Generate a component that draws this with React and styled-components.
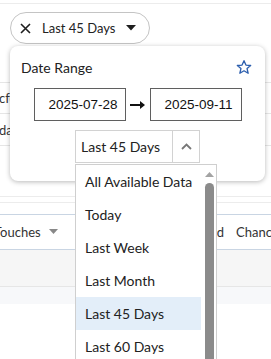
import React from "react";
import styled, { createGlobalStyle } from "styled-components";

const Global = createGlobalStyle`
  html, body { margin: 0; padding: 0; background: #fff; }
  body { font-family: Lato, "Open Sans", sans-serif; color: #222; }
  * { box-sizing: border-box; }
`;

const Page = styled.div`
  position: relative;
  width: 271px;
  height: 359px;
  overflow: hidden;
  background: #fff;
  padding-top: 3px;
`;

const FilterBar = styled.div`
  border-top: 1px solid #ececec;
  padding: 8px 10px 0;
  height: 79px;
`;

const Pill = styled.button`
  display: inline-flex;
  align-items: center;
  height: 32px;
  width: 140px;
  padding: 0 0 0 9px;
  border: 1px solid #c4c4c4;
  border-radius: 16px;
  background: #fff;
  font-family: Lato, sans-serif;
  font-size: 13px;
  color: #222;
  gap: 11px;
`;

const BgRow = styled.div`
  height: ${(p) => p.$h}px;
  border-top: 1px solid ${(p) => p.$line || "#e6e6e6"};
  background: ${(p) => p.$bg || "transparent"};
  display: flex;
  align-items: center;
  font-size: 13px;
  color: #333;
  white-space: nowrap;
  overflow: hidden;
`;

const HeaderGrid = styled.div`
  height: 35px;
  border-top: 1px solid #c9d5e3;
  display: grid;
  grid-template-columns: 160px 64px 80px;
  align-items: center;
  font-size: 13px;
  color: #333;
  white-space: nowrap;
  overflow: hidden;
`;

const ClipText = styled.span`
  margin-left: ${(p) => p.$offset || 0}px;
`;

const HeaderCell = styled.span`
  display: inline-flex;
  align-items: center;
  justify-content: ${(p) => (p.$right ? "flex-end" : "flex-start")};
  gap: 8px;
  margin-left: ${(p) => p.$offset || 0}px;
`;

const Popover = styled.div`
  position: absolute;
  top: 46px;
  left: 10px;
  width: 255px;
  height: 135px;
  background: #fff;
  border-radius: 8px;
  box-shadow: 0 1px 5px rgba(0, 0, 0, 0.28);
  padding: 12px 13px 0 11px;
`;

const PopHeader = styled.div`
  display: flex;
  justify-content: space-between;
  align-items: center;
  height: 18px;
`;

const Title = styled.span`
  font-size: 14px;
  color: #222;
`;

const DateRow = styled.div`
  display: flex;
  justify-content: center;
  align-items: center;
  gap: 4px;
  margin-top: 12px;
  margin-left: -11px;
  margin-right: -13px;
`;

const DateBox = styled.div`
  width: 92px;
  height: 33px;
  border: 1px solid #5f5f5f;
  display: flex;
  align-items: center;
  padding-left: 14px;
  font-family: "Liberation Sans", Arial, sans-serif;
  font-size: 13.5px;
  color: #111;
`;

const SelectRow = styled.div`
  display: flex;
  justify-content: center;
  margin-top: 9px;
  margin-left: -11px;
  margin-right: -13px;
`;

const SelectWrap = styled.div`
  position: relative;
  width: 125px;
  height: 33px;
`;

const SelectBox = styled.div`
  display: flex;
  height: 33px;
  border: 1px solid #d2d2d2;
  background: #fff;
`;

const SelectValue = styled.span`
  flex: 1;
  display: flex;
  align-items: center;
  padding-left: 5px;
  font-size: 14px;
  color: #222;
`;

const SelectToggle = styled.span`
  width: 27px;
  border-left: 1px solid #d2d2d2;
  display: flex;
  align-items: center;
  justify-content: center;
`;

const Menu = styled.div`
  position: absolute;
  top: 34px;
  left: 0;
  width: 142px;
  height: 240px;
  display: flex;
  background: #fff;
  border: 1px solid #cfcfcf;
  overflow: hidden;
`;

const MenuList = styled.ul`
  flex: 1;
  margin: 0;
  padding: 0;
  list-style: none;
`;

const MenuItem = styled.li`
  height: 33px;
  display: flex;
  align-items: center;
  padding-left: 9px;
  font-size: 14px;
  color: #222;
  white-space: nowrap;
  background: ${(p) => (p.$active ? "#e3eef9" : "transparent")};
`;

const ScrollTrack = styled.div`
  width: 15px;
  flex: 0 0 15px;
  display: flex;
  flex-direction: column;
  align-items: center;
  padding-top: 7px;
`;

const ScrollThumb = styled.div`
  margin-top: 6px;
  width: 9px;
  flex: 1;
  background: #8b8b8b;
  border-radius: 5px 5px 0 0;
  margin-left: 2px;
`;

const options = [
  "All Available Data",
  "Today",
  "Last Week",
  "Last Month",
  "Last 45 Days",
  "Last 60 Days",
  "Last 90 Days",
  "Last Quarter",
];

export default function App() {
  return (
    <>
      <Global />
      <Page>
        <FilterBar>
          <Pill>
            <svg width="11" height="11" viewBox="0 0 11 11">
              <path d="M1 1L10 10M10 1L1 10" stroke="#1e1e1e" strokeWidth="1.6" />
            </svg>
            <span>Last 45 Days</span>
            <svg width="10" height="6" viewBox="0 0 10 6">
              <path d="M0 0H10L5 5.5Z" fill="#1e1e1e" />
            </svg>
          </Pill>
        </FilterBar>
        <BgRow $h={31}>
          <ClipText $offset={-1}>cfo</ClipText>
        </BgRow>
        <BgRow $h={32}>
          <ClipText $offset={-1}>da</ClipText>
        </BgRow>
        <BgRow $h={51} />
        <BgRow $h={6} $line="#ececec" />
        <BgRow $h={12} $line="#ececec" />
        <HeaderGrid>
          <HeaderCell $offset={-6}>
            Touches
            <svg width="9" height="6" viewBox="0 0 9 6">
              <path d="M0 0H9L4.5 5Z" fill="#888" />
            </svg>
          </HeaderCell>
          <HeaderCell $right>Updated</HeaderCell>
          <HeaderCell $offset={12}>Chance</HeaderCell>
        </HeaderGrid>
        <BgRow $h={37} $line="#c9d5e3" $bg="#f6f6f6" />
        <BgRow $h={18} $line="#e6e6e6" $bg="#f7f8fa" />

        <Popover>
          <PopHeader>
            <Title>Date Range</Title>
            <svg width="16" height="16" viewBox="0 0 24 24">
              <path
                d="M12 2.5l2.9 6.6 7.1.6-5.4 4.7 1.6 7-6.2-3.7-6.2 3.7 1.6-7L2 9.7l7.1-.6z"
                fill="none"
                stroke="#2d5fae"
                strokeWidth="2"
                strokeLinejoin="round"
              />
            </svg>
          </PopHeader>
          <DateRow>
            <DateBox>2025-07-28</DateBox>
            <svg width="16" height="10" viewBox="0 0 16 10">
              <path d="M0 5H13" stroke="#111" strokeWidth="2" />
              <path d="M10 1L15 5L10 9Z" fill="#111" />
            </svg>
            <DateBox>2025-09-11</DateBox>
          </DateRow>
          <SelectRow>
            <SelectWrap>
              <SelectBox>
                <SelectValue>Last 45 Days</SelectValue>
                <SelectToggle>
                  <svg width="11" height="7" viewBox="0 0 11 7">
                    <path d="M1 6L5.5 1.5L10 6" fill="none" stroke="#777" strokeWidth="1.8" />
                  </svg>
                </SelectToggle>
              </SelectBox>
              <Menu>
                <MenuList>
                  {options.map((o) => (
                    <MenuItem key={o} $active={o === "Last 45 Days"}>
                      {o}
                    </MenuItem>
                  ))}
                </MenuList>
                <ScrollTrack>
                  <svg width="9" height="5" viewBox="0 0 9 5" style={{ marginLeft: 2 }}>
                    <path d="M0 5L4.5 0L9 5Z" fill="#a3a3a3" />
                  </svg>
                  <ScrollThumb />
                </ScrollTrack>
              </Menu>
            </SelectWrap>
          </SelectRow>
        </Popover>
      </Page>
    </>
  );
}
